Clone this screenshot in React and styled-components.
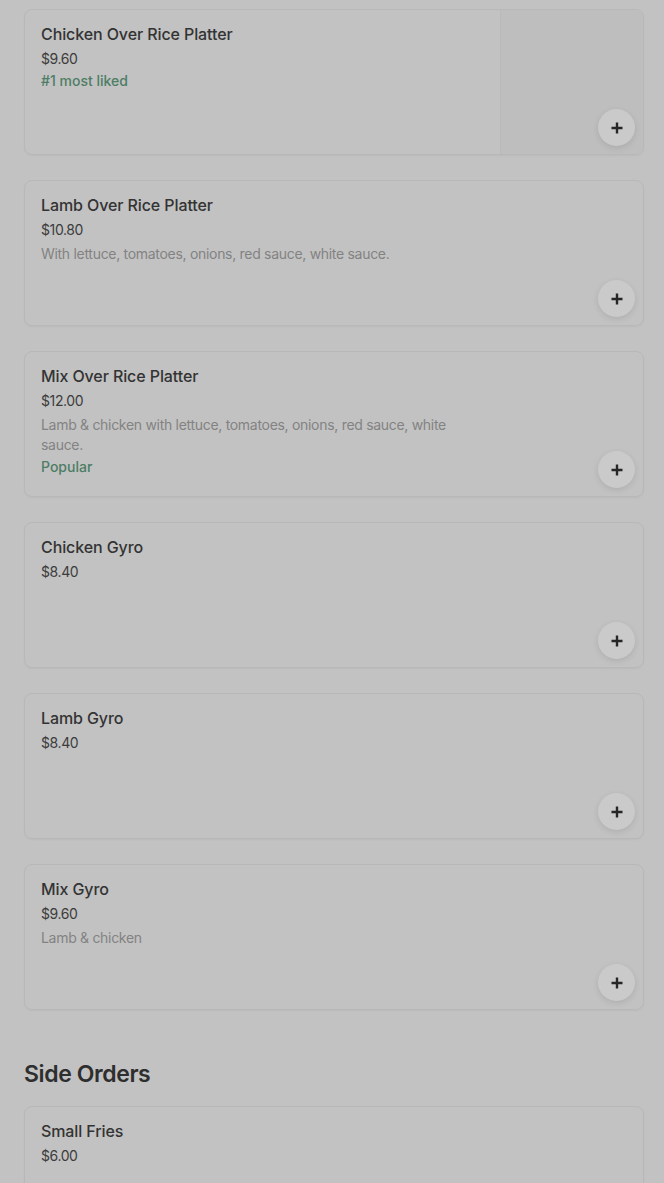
import React from "react";
import styled, { createGlobalStyle } from "styled-components";

const Global = createGlobalStyle`
  html, body { margin: 0; padding: 0; background: #c2c2c2; }
  body { font-family: Inter, "Noto Sans", "Liberation Sans", sans-serif; -webkit-font-smoothing: antialiased; }
`;

const Page = styled.div`
  padding: 9px 20px 0 24px;
  display: flex;
  flex-direction: column;
`;

const List = styled.div`
  display: flex;
  flex-direction: column;
  gap: 25px;
`;

const Card = styled.div`
  position: relative;
  height: 146px;
  box-sizing: border-box;
  border: 1px solid #b8b8b8;
  border-radius: 8px;
  display: flex;
  overflow: hidden;
  box-shadow: 0 1px 2px rgba(0, 0, 0, 0.04);
`;

const Info = styled.div`
  flex: 1;
  padding: 14px 16px 0 16px;
  max-width: 432px;
  display: flex;
  flex-direction: column;
`;

const Title = styled.div`
  font-size: 16px;
  line-height: 20px;
  font-weight: 500;
  color: #333;
  letter-spacing: -0.1px;
`;

const Price = styled.div`
  margin-top: 5px;
  font-size: 14px;
  line-height: 20px;
  color: #3c3c3c;
  letter-spacing: -0.4px;
`;

const Desc = styled.div`
  margin-top: 4px;
  font-size: 14px;
  line-height: 20px;
  color: #828282;
  letter-spacing: -0.3px;
`;

const Tag = styled.div`
  margin-top: 2px;
  font-size: 14px;
  line-height: 20px;
  font-weight: 500;
  color: #4d7d65;
`;

const Photo = styled.div`
  margin-left: auto;
  width: 142px;
  align-self: stretch;
  background: #bebebe;
  border-left: 1px solid #bababa;
`;

const AddButton = styled.button`
  position: absolute;
  right: 8px;
  bottom: 8px;
  width: 37px;
  height: 37px;
  border-radius: 50%;
  border: none;
  padding: 0;
  background: #cacaca;
  box-shadow: 0 2px 6px rgba(0, 0, 0, 0.1);
  display: flex;
  align-items: center;
  justify-content: center;
  color: #262626;
`;

const SectionTitle = styled.h2`
  margin: 48px 0 16px;
  font-size: 23px;
  line-height: 32px;
  font-weight: 600;
  color: #2e2e2e;
  letter-spacing: -0.4px;
`;

const Plus = () => (
  <svg width="14" height="14" viewBox="0 0 14 14">
    <path d="M7 1.5v11M1.5 7h11" stroke="currentColor" strokeWidth="2.4" />
  </svg>
);

const items = [
  { title: "Chicken Over Rice Platter", price: "$9.60", tag: "#1 most liked", photo: true },
  { title: "Lamb Over Rice Platter", price: "$10.80", desc: "With lettuce, tomatoes, onions, red sauce, white sauce." },
  { title: "Mix Over Rice Platter", price: "$12.00", desc: "Lamb & chicken with lettuce, tomatoes, onions, red sauce, white sauce.", tag: "Popular" },
  { title: "Chicken Gyro", price: "$8.40" },
  { title: "Lamb Gyro", price: "$8.40" },
  { title: "Mix Gyro", price: "$9.60", desc: "Lamb & chicken" },
];

const sides = [{ title: "Small Fries", price: "$6.00" }];

const Item = ({ it }) => (
  <Card>
    <Info>
      <Title>{it.title}</Title>
      <Price>{it.price}</Price>
      {it.desc && <Desc>{it.desc}</Desc>}
      {it.tag && <Tag>{it.tag}</Tag>}
    </Info>
    {it.photo && <Photo />}
    <AddButton aria-label="Add">
      <Plus />
    </AddButton>
  </Card>
);

export default function App() {
  return (
    <>
      <Global />
      <Page>
        <List>
          {items.map((it) => (
            <Item key={it.title} it={it} />
          ))}
        </List>
        <SectionTitle>Side Orders</SectionTitle>
        <List>
          {sides.map((it) => (
            <Item key={it.title} it={it} />
          ))}
        </List>
      </Page>
    </>
  );
}
